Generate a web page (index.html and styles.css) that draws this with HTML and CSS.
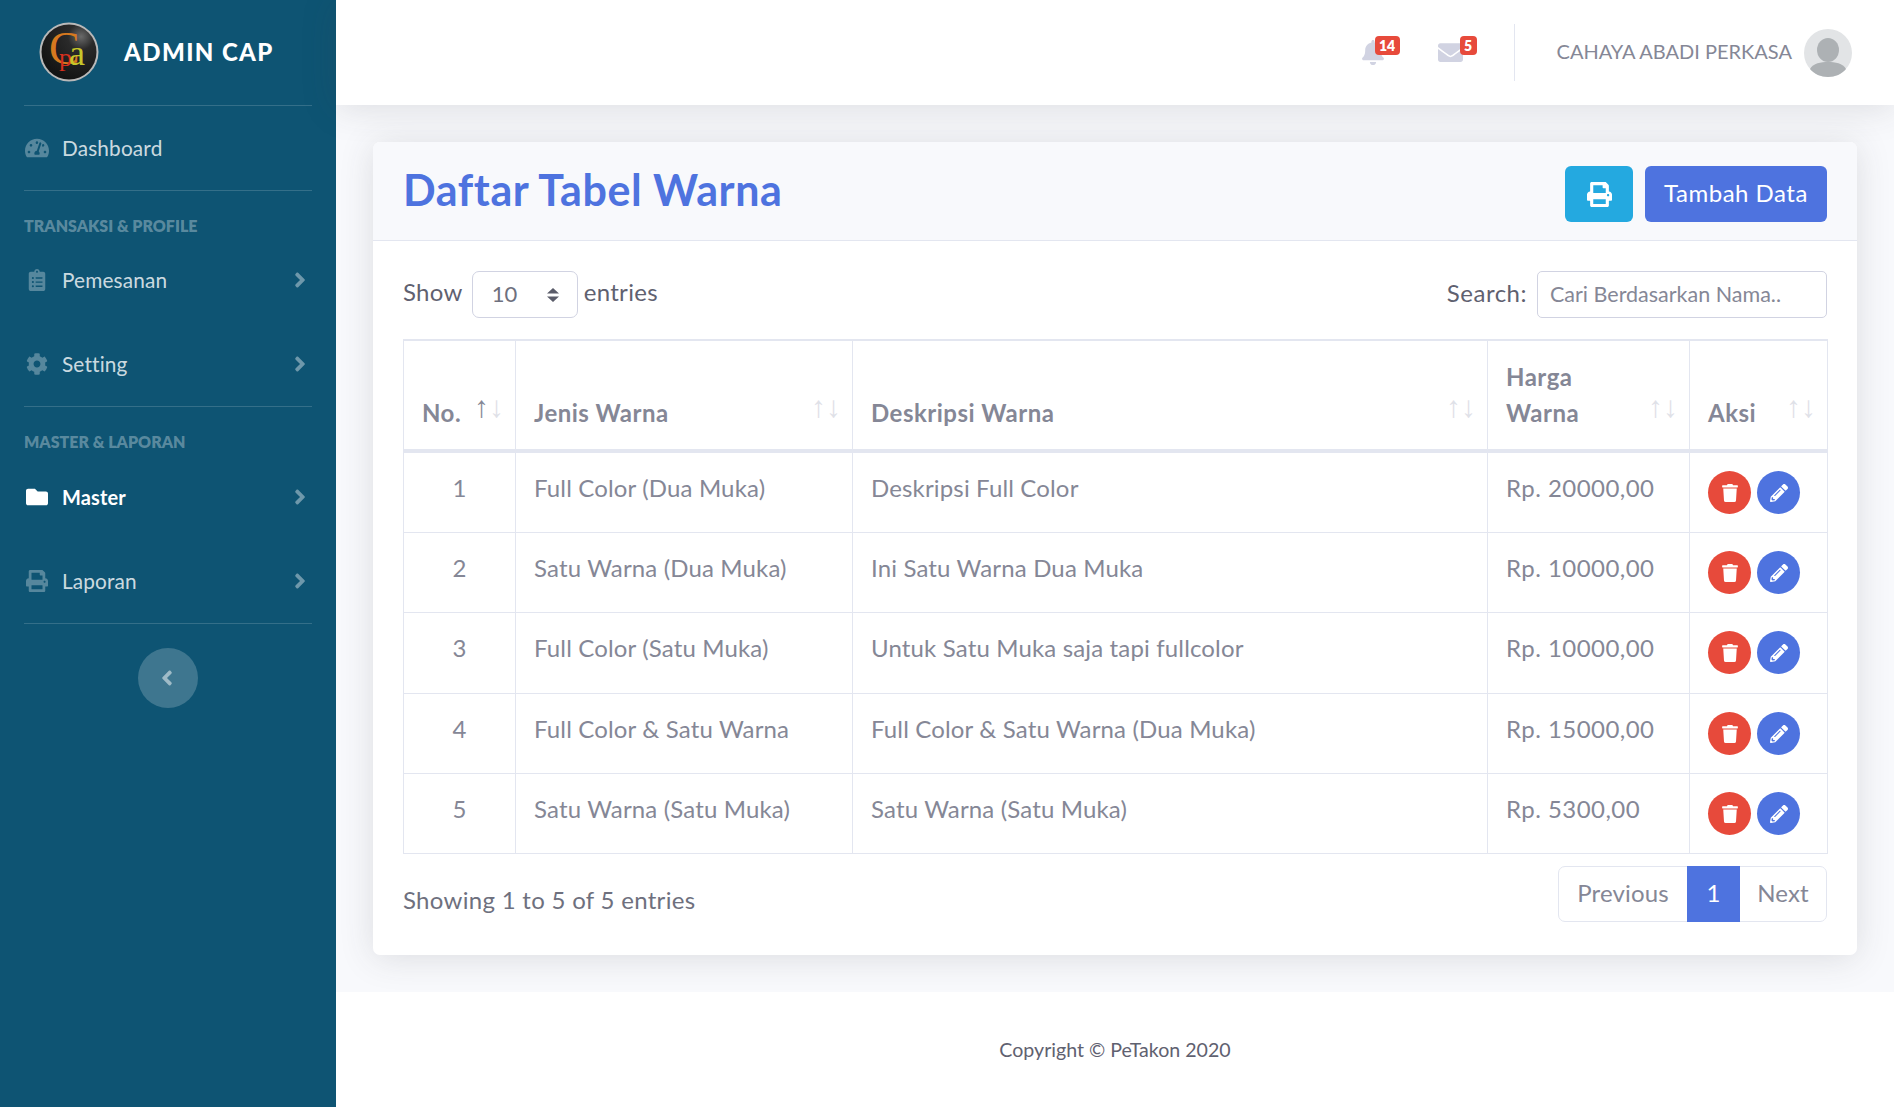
FILE: index.html
```html
<!DOCTYPE html>
<html lang="id">
<head>
<meta charset="utf-8">
<title>Daftar Tabel Warna</title>
<link rel="stylesheet" href="styles.css">
</head>
<body>
<svg class="sprite" aria-hidden="true">
  <symbol id="i-chev-r" viewBox="0 0 256 512"><path d="M224.3 273l-136 136c-9.4 9.4-24.6 9.4-33.9 0l-22.6-22.6c-9.4-9.4-9.4-24.6 0-33.9l96.4-96.4-96.4-96.4c-9.4-9.4-9.4-24.6 0-33.9L54.3 103c9.4-9.4 24.6-9.4 33.9 0l136 136c9.5 9.4 9.5 24.6.1 34z"/></symbol>
  <symbol id="i-chev-l" viewBox="0 0 256 512"><path d="M31.7 239l136-136c9.4-9.4 24.6-9.4 33.9 0l22.6 22.6c9.4 9.4 9.4 24.6 0 33.9L127.9 256l96.4 96.4c9.4 9.4 9.4 24.6 0 33.9L201.7 409c-9.4 9.4-24.6 9.4-33.9 0l-136-136c-9.5-9.4-9.5-24.6-.1-34z"/></symbol>
  <symbol id="i-trash" viewBox="0 0 448 512"><path d="M432 32H312l-9.4-18.7A24 24 0 0 0 281.1 0H166.8a23.72 23.72 0 0 0-21.4 13.3L136 32H16A16 16 0 0 0 0 48v32a16 16 0 0 0 16 16h416a16 16 0 0 0 16-16V48a16 16 0 0 0-16-16zM53.2 467a48 48 0 0 0 47.9 45h245.8a48 48 0 0 0 47.9-45L416 128H32z"/></symbol>
  <symbol id="i-pencil" viewBox="0 0 512 512"><path d="M497.9 142.1l-46.1 46.1c-4.7 4.7-12.3 4.7-17 0l-111-111c-4.7-4.7-4.7-12.3 0-17l46.1-46.1c18.7-18.7 49.1-18.7 67.9 0l60.1 60.1c18.8 18.7 18.8 49.1 0 67.9zM284.2 99.8L21.6 362.4.4 483.9c-2.9 16.4 11.4 30.6 27.8 27.8l121.5-21.3 262.6-262.6c4.7-4.7 4.7-12.3 0-17l-111-111c-4.8-4.7-12.4-4.7-17.1 0zM124.1 339.9c-5.5-5.5-5.5-14.3 0-19.8l154-154c5.5-5.5 14.3-5.5 19.8 0s5.5 14.3 0 19.8l-154 154c-5.5 5.5-14.3 5.5-19.8 0zM88 424h48v36.3l-64.5 11.3-31.1-31.1L51.7 376H88v48z"/></symbol>
  <symbol id="i-folder" viewBox="0 0 512 512"><path d="M464 128H272l-64-64H48C21.49 64 0 85.49 0 112v288c0 26.51 21.49 48 48 48h416c26.51 0 48-21.49 48-48V176c0-26.51-21.49-48-48-48z"/></symbol>
  <symbol id="i-print" viewBox="0 0 512 512"><path d="M448 192V77.25c0-8.49-3.37-16.62-9.37-22.63L393.37 9.37c-6-6-14.14-9.37-22.63-9.37H96C78.33 0 64 14.33 64 32v160c-35.35 0-64 28.65-64 64v112c0 8.84 7.16 16 16 16h48v96c0 17.67 14.33 32 32 32h320c17.67 0 32-14.33 32-32v-96h48c8.84 0 16-7.16 16-16V256c0-35.35-28.65-64-64-64zm-64 256H128v-96h256v96zm0-224H128V64h192v48c0 8.84 7.16 16 16 16h48v96zm48 72c-13.25 0-24-10.75-24-24 0-13.26 10.75-24 24-24s24 10.74 24 24c0 13.25-10.75 24-24 24z"/></symbol>
  <symbol id="i-cog" viewBox="0 0 512 512"><path d="M487.4 315.7l-42.6-24.6c4.3-23.2 4.3-47 0-70.2l42.6-24.6c4.9-2.8 7.1-8.6 5.5-14-11.1-35.6-30-67.8-54.7-94.6-3.8-4.1-10-5.1-14.8-2.3L380.8 110c-17.9-15.4-38.5-27.3-60.8-35.1V25.8c0-5.6-3.9-10.5-9.4-11.7-36.7-8.2-74.3-7.8-109.2 0-5.5 1.2-9.4 6.1-9.4 11.7V75c-22.2 7.9-42.8 19.8-60.8 35.1L88.7 85.5c-4.9-2.8-11-1.9-14.8 2.3-24.7 26.7-43.6 58.9-54.7 94.6-1.7 5.4.6 11.2 5.5 14L67.3 221c-4.3 23.2-4.3 47 0 70.2l-42.6 24.6c-4.9 2.8-7.1 8.6-5.5 14 11.1 35.6 30 67.8 54.7 94.6 3.8 4.1 10 5.1 14.8 2.3l42.6-24.6c17.9 15.4 38.5 27.3 60.8 35.1v49.2c0 5.6 3.9 10.5 9.4 11.7 36.7 8.2 74.3 7.8 109.2 0 5.5-1.2 9.4-6.1 9.4-11.7v-49.2c22.2-7.9 42.8-19.8 60.8-35.1l42.6 24.6c4.9 2.8 11 1.9 14.8-2.3 24.7-26.7 43.6-58.9 54.7-94.6 1.5-5.5-.7-11.3-5.6-14.1zM256 336c-44.1 0-80-35.9-80-80s35.9-80 80-80 80 35.9 80 80-35.9 80-80 80z"/></symbol>
  <symbol id="i-clip" viewBox="0 0 384 512"><path d="M336 64h-80c0-35.3-28.7-64-64-64s-64 28.7-64 64H48C21.5 64 0 85.5 0 112v352c0 26.5 21.5 48 48 48h288c26.5 0 48-21.5 48-48V112c0-26.5-21.5-48-48-48zM96 424c-13.3 0-24-10.7-24-24s10.7-24 24-24 24 10.7 24 24-10.7 24-24 24zm0-96c-13.3 0-24-10.7-24-24s10.7-24 24-24 24 10.7 24 24-10.7 24-24 24zm0-96c-13.3 0-24-10.7-24-24s10.7-24 24-24 24 10.7 24 24-10.7 24-24 24zm96-192c13.3 0 24 10.7 24 24s-10.7 24-24 24-24-10.7-24-24 10.7-24 24-24zm128 368c0 4.4-3.6 8-8 8H168c-4.4 0-8-3.6-8-8v-16c0-4.4 3.6-8 8-8h144c4.4 0 8 3.6 8 8v16zm0-96c0 4.4-3.6 8-8 8H168c-4.4 0-8-3.6-8-8v-16c0-4.4 3.6-8 8-8h144c4.4 0 8 3.6 8 8v16zm0-96c0 4.4-3.6 8-8 8H168c-4.4 0-8-3.6-8-8v-16c0-4.4 3.6-8 8-8h144c4.4 0 8 3.6 8 8v16z"/></symbol>
  <symbol id="i-gauge" viewBox="0 0 576 512"><path d="M288 32C128.94 32 0 160.94 0 320c0 52.8 14.25 102.26 39.06 144.8 5.61 9.62 16.3 15.2 27.44 15.2h443c11.14 0 21.83-5.58 27.44-15.2C561.75 422.26 576 372.8 576 320c0-159.06-128.94-288-288-288zm0 64c14.71 0 26.58 10.13 30.32 23.65-1.11 2.26-2.64 4.23-3.45 6.67l-9.22 27.67c-5.13 3.49-10.97 6.01-17.64 6.01-17.67 0-32-14.33-32-32S270.33 96 288 96zM96 384c-17.67 0-32-14.33-32-32s14.33-32 32-32 32 14.33 32 32-14.33 32-32 32zm48-160c-17.67 0-32-14.33-32-32s14.33-32 32-32 32 14.33 32 32-14.33 32-32 32zm246.77-72.41l-61.33 184C343.13 347.33 352 364.54 352 384c0 11.72-3.38 22.55-8.88 32H232.88c-5.5-9.45-8.88-20.28-8.88-32 0-33.94 26.5-61.43 59.9-63.59l61.34-184.01c4.17-12.56 17.73-19.45 30.36-15.17 12.57 4.19 19.35 17.79 15.17 30.36zm14.66 57.2l15.52-46.55c3.47-1.29 7.13-2.23 11.05-2.23 17.67 0 32 14.33 32 32s-14.33 32-32 32c-11.38-.01-20.89-6.28-26.57-15.22zM480 384c-17.67 0-32-14.33-32-32s14.33-32 32-32 32 14.33 32 32-14.33 32-32 32z"/></symbol>
  <symbol id="i-bell" viewBox="0 0 448 512"><path d="M224 512c35.32 0 63.97-28.65 63.97-64H160.03c0 35.35 28.65 64 63.97 64zm215.39-149.71c-19.32-20.76-55.47-51.99-55.47-154.29 0-77.7-54.48-139.9-127.94-155.16V32c0-17.67-14.32-32-31.98-32s-31.98 14.33-31.98 32v20.84C118.56 68.1 64.08 130.3 64.08 208c0 102.3-36.15 133.53-55.47 154.29-6 6.45-8.66 14.16-8.61 21.71.11 16.4 12.98 32 32.1 32h383.8c19.12 0 32-15.6 32.1-32 .05-7.55-2.61-15.27-8.61-21.71z"/></symbol>
  <symbol id="i-env" viewBox="0 0 512 512"><path d="M502.3 190.8c3.9-3.1 9.7-.2 9.7 4.7V400c0 26.5-21.5 48-48 48H48c-26.5 0-48-21.5-48-48V195.6c0-5 5.7-7.8 9.7-4.7 22.4 17.4 52.1 39.5 154.1 113.6 21.1 15.4 56.7 47.8 92.2 47.6 35.7.3 72-32.8 92.3-47.6 102-74.1 131.6-96.3 154-113.7zM256 320c23.2.4 56.6-29.2 73.4-41.4 132.7-96.3 142.8-104.7 173.4-128.7 5.8-4.5 9.2-11.5 9.2-18.9v-19c0-26.5-21.5-48-48-48H48C21.5 64 0 85.5 0 112v19c0 7.4 3.4 14.3 9.2 18.9 30.6 23.9 40.7 32.4 173.4 128.7 16.8 12.2 50.2 41.8 73.4 41.4z"/></symbol>
</svg>

<div class="app">
  <aside class="sidebar">
    <a class="brand">
      <svg class="logo" viewBox="0 0 60 60">
        <defs>
          <radialGradient id="lg-ball" cx="0.72" cy="0.22" r="0.8">
            <stop offset="0" stop-color="#6a6a6a"/>
            <stop offset="0.3" stop-color="#2a2a2a"/>
            <stop offset="1" stop-color="#141414"/>
          </radialGradient>
        </defs>
        <circle cx="30" cy="30" r="29.5" fill="#b9b9b9"/>
        <circle cx="30" cy="30" r="27.5" fill="url(#lg-ball)"/>
        <text class="logo-text"><tspan class="logo-c" x="10" y="42">C</tspan><tspan class="logo-p" x="20" y="44">p</tspan><tspan class="logo-a" x="30" y="43">a</tspan></text>
      </svg>
      <span class="brand-text">ADMIN CAP</span>
    </a>
    <hr class="divider">
    <a class="nav-link"><svg class="nav-icon"><use href="#i-gauge"/></svg><span>Dashboard</span></a>
    <hr class="divider">
    <div class="nav-heading">Transaksi &amp; Profile</div>
    <a class="nav-link"><svg class="nav-icon"><use href="#i-clip"/></svg><span>Pemesanan</span><svg class="nav-chev"><use href="#i-chev-r"/></svg></a>
    <a class="nav-link"><svg class="nav-icon"><use href="#i-cog"/></svg><span>Setting</span><svg class="nav-chev"><use href="#i-chev-r"/></svg></a>
    <hr class="divider">
    <div class="nav-heading tall">Master &amp; Laporan</div>
    <a class="nav-link active"><svg class="nav-icon"><use href="#i-folder"/></svg><span class="nav-label">Master</span><svg class="nav-chev"><use href="#i-chev-r"/></svg></a>
    <a class="nav-link"><svg class="nav-icon"><use href="#i-print"/></svg><span>Laporan</span><svg class="nav-chev"><use href="#i-chev-r"/></svg></a>
    <hr class="divider">
    <button class="sidebar-toggle" aria-label="Tutup menu"><svg><use href="#i-chev-l"/></svg></button>
  </aside>

  <div class="main">
    <header class="topbar">
      <a class="alert-item bell"><svg class="alert-icon"><use href="#i-bell"/></svg><span class="badge">14</span></a>
      <a class="alert-item env"><svg class="alert-icon"><use href="#i-env"/></svg><span class="badge">5</span></a>
      <div class="topbar-divider"></div>
      <span class="user-name">CAHAYA ABADI PERKASA</span>
      <svg class="avatar" viewBox="0 0 48 48">
        <circle cx="24" cy="24" r="24" fill="#e2e4e6"/>
        <ellipse cx="24" cy="21" rx="11" ry="12" fill="#adb1b4"/>
        <path d="M6 40c3-6 11-7 18-7s15 1 18 7c-4 5-11 8-18 8S10 45 6 40z" fill="#adb1b4"/>
      </svg>
    </header>

    <main class="content">
      <section class="card">
        <div class="card-header">
          <h1 class="card-title">Daftar Tabel Warna</h1>
          <div class="card-actions">
            <a class="btn btn-info" aria-label="Cetak"><svg><use href="#i-print"/></svg></a>
            <a class="btn btn-primary">Tambah Data</a>
          </div>
        </div>
        <div class="card-body">
          <div class="dt-controls">
            <label class="dt-length">Show
              <span class="select-wrap">
                <select class="select"><option>10</option></select>
                <svg class="select-arrows" viewBox="0 0 12 14"><path d="M6 0l6 5.500H0zM6 14L0 8.500h12z"/></svg>
              </span>
              entries</label>
            <label class="dt-search">Search: <input class="input" type="search" placeholder="Cari Berdasarkan Nama.."></label>
          </div>

          <table class="table">
            <colgroup><col class="c1"><col class="c2"><col class="c3"><col class="c4"><col class="c5"></colgroup>
            <thead>
              <tr>
                <th>No.<span class="sort asc"><i>↑</i><i>↓</i></span></th>
                <th>Jenis Warna<span class="sort"><i>↑</i><i>↓</i></span></th>
                <th>Deskripsi Warna<span class="sort"><i>↑</i><i>↓</i></span></th>
                <th>Harga<br>Warna<span class="sort"><i>↑</i><i>↓</i></span></th>
                <th>Aksi<span class="sort"><i>↑</i><i>↓</i></span></th>
              </tr>
            </thead>
            <tbody>
              <tr><td class="num">1</td><td>Full Color (Dua Muka)</td><td>Deskripsi Full Color</td><td class="price">Rp. 20000,00</td><td class="act"><a class="circle red"><svg class="ic-trash"><use href="#i-trash"/></svg></a><a class="circle blue"><svg class="ic-pencil"><use href="#i-pencil"/></svg></a></td></tr>
              <tr><td class="num">2</td><td>Satu Warna (Dua Muka)</td><td>Ini Satu Warna Dua Muka</td><td class="price">Rp. 10000,00</td><td class="act"><a class="circle red"><svg class="ic-trash"><use href="#i-trash"/></svg></a><a class="circle blue"><svg class="ic-pencil"><use href="#i-pencil"/></svg></a></td></tr>
              <tr><td class="num">3</td><td>Full Color (Satu Muka)</td><td>Untuk Satu Muka saja tapi fullcolor</td><td class="price">Rp. 10000,00</td><td class="act"><a class="circle red"><svg class="ic-trash"><use href="#i-trash"/></svg></a><a class="circle blue"><svg class="ic-pencil"><use href="#i-pencil"/></svg></a></td></tr>
              <tr><td class="num">4</td><td>Full Color &amp; Satu Warna</td><td>Full Color &amp; Satu Warna (Dua Muka)</td><td class="price">Rp. 15000,00</td><td class="act"><a class="circle red"><svg class="ic-trash"><use href="#i-trash"/></svg></a><a class="circle blue"><svg class="ic-pencil"><use href="#i-pencil"/></svg></a></td></tr>
              <tr><td class="num">5</td><td>Satu Warna (Satu Muka)</td><td>Satu Warna (Satu Muka)</td><td class="price">Rp. 5300,00</td><td class="act"><a class="circle red"><svg class="ic-trash"><use href="#i-trash"/></svg></a><a class="circle blue"><svg class="ic-pencil"><use href="#i-pencil"/></svg></a></td></tr>
            </tbody>
          </table>

          <div class="dt-footer">
            <div class="dt-info">Showing 1 to 5 of 5 entries</div>
            <nav class="pagination">
              <a class="page">Previous</a>
              <a class="page current">1</a>
              <a class="page">Next</a>
            </nav>
          </div>
        </div>
      </section>
    </main>

    <footer class="footer">Copyright © PeTakon 2020</footer>
  </div>
</div>
</body>
</html>
```
FILE: styles.css
```css
* { box-sizing: border-box; }
html, body { margin: 0; height: 100%; }
body {
  font-family: Lato, "Noto Sans", sans-serif;
  color: #858796;
  background: #f8f9fc;
  font-size: 24px;
  line-height: 36px;
  letter-spacing: .15px;
  overflow: hidden;
}
.sprite { position: absolute; width: 0; height: 0; }
svg { fill: currentColor; display: block; }
.app { display: flex; height: 1107px; }

/* sidebar */
.sidebar {
  width: 336px;
  flex: none;
  background: #0e5473;
  padding: 0 24px;
  display: flex;
  flex-direction: column;
}
.brand { height: 105px; display: flex; align-items: center; padding: 0 0 2px 15px; gap: 25px; }
.logo { width: 60px; height: 60px; flex: none; }
.logo-text { font-family: "Liberation Serif", serif; letter-spacing: 0; }
.logo-c { font-size: 46px; fill: #d6791f; }
.logo-p { font-size: 26px; fill: #d8301e; }
.logo-a { font-size: 36px; fill: #c7c72a; }
.brand-text { color: #fff; font-size: 24px; font-weight: 900; letter-spacing: 1.4px; line-height: 30px; }
.divider { margin: 0; border: 0; border-top: 1px solid rgba(255,255,255,.16); height: 1px; flex: none; }
.nav-link {
  height: 84px;
  flex: none;
  display: flex;
  align-items: center;
  color: rgba(255,255,255,.8);
  font-size: 20.8px;
  line-height: 30px;
}
.nav-icon { width: 24px; height: 22px; color: rgba(255,255,255,.3); margin: 0 13px 0 1px; flex: none; }
.nav-chev { width: 12px; height: 24px; color: rgba(255,255,255,.4); margin-left: auto; margin-right: 6px; }
.nav-link.active { color: #fff; font-weight: 700; }
.nav-link.active .nav-label { font-size: 20px; }
.nav-link.active .nav-icon { color: #fff; }
.nav-heading {
  height: 47px;
  padding-top: 25px;
  font-size: 16px;
  line-height: 20px;
  font-weight: 800;
  letter-spacing: 0;
  text-transform: uppercase;
  color: rgba(255,255,255,.32);
}
.nav-heading.tall { height: 48px; }
.sidebar-toggle {
  width: 60px; height: 60px;
  border: 0; border-radius: 50%;
  background: rgba(255,255,255,.2);
  color: rgba(255,255,255,.5);
  margin: 24px auto 0;
  padding: 0;
  display: flex; align-items: center; justify-content: center;
}
.sidebar-toggle svg { width: 12px; height: 24px; margin-left: -2px; }

/* main */
.main { flex: 1; min-width: 0; display: flex; flex-direction: column; }
.topbar {
  height: 105px;
  flex: none;
  background: #fff;
  display: flex;
  align-items: center;
  padding-right: 42px;
  box-shadow: 0 3px 34px rgba(58,59,69,.15);
  position: relative;
}
.alert-item { position: relative; display: block; color: #d1d3e2; }
.bell { margin-left: auto; width: 22px; height: 25px; }
.env { margin-left: 54px; width: 25px; height: 25px; }
.alert-icon { width: 100%; height: 100%; }
.badge {
  position: absolute;
  height: 19px;
  border-radius: 4px;
  background: #e74a3b;
  color: #fff;
  font-size: 14px;
  font-weight: 800;
  line-height: 19px;
  letter-spacing: 0;
  text-align: center;
  top: -4px;
}
.bell .badge { left: 13px; width: 25px; }
.env .badge { left: 22px; width: 17px; }
.topbar-divider { width: 1px; height: 57px; background: #e3e6f0; margin: 0 42px 0 51px; }
.user-name { color: #858796; font-size: 20px; line-height: 30px; letter-spacing: 0; padding-bottom: 3px; }
.avatar { width: 48px; height: 48px; margin-left: 12px; }

.content { flex: 1; padding: 37px; min-height: 0; }
.card {
  background: #fff;
  border-radius: 7px;
  box-shadow: 0 3px 34px rgba(58,59,69,.15);
  overflow: hidden;
  height: 813px;
}
.card-header {
  height: 99px;
  background: #f8f9fc;
  border-bottom: 1px solid #e3e6f0;
  padding: 0 30px;
  display: flex;
  align-items: center;
  justify-content: space-between;
}
.card-title { margin: -2px 0 0; color: #4e73df; font-size: 43px; font-weight: 700; line-height: 50px; letter-spacing: .6px; }
.card-actions { display: flex; gap: 12px; margin-top: 6px; }
.btn {
  height: 56px;
  border-radius: 6px;
  color: #fff;
  display: flex;
  align-items: center;
  justify-content: center;
}
.btn-info { background: #24a9e0; width: 68px; }
.btn-info svg { width: 25px; height: 25px; }
.btn-primary { background: #4e73df; width: 182px; font-size: 24px; letter-spacing: .5px; padding-bottom: 2px; }

.card-body { padding: 30px 30px 0; }
.dt-controls { display: flex; justify-content: space-between; height: 47px; margin-bottom: 21px; }
.dt-length, .dt-search { display: flex; align-items: flex-start; color: #5f6170; }
.dt-length { line-height: 41px; letter-spacing: .3px; }
.dt-search { line-height: 43px; letter-spacing: .5px; }
.select-wrap { position: relative; display: block; margin: 0 6px 0 9px; }
.select {
  appearance: none;
  display: block;
  width: 106px; height: 47px;
  border: 1px solid #d1d3e2;
  border-radius: 7px;
  background: #fff;
  color: #6e707e;
  font: inherit;
  font-size: 22px;
  padding: 0 0 2px 19px;
}
.select-arrows { position: absolute; right: 19px; top: 17px; width: 12px; height: 14px; fill: #5a5c69; }
.dt-search { gap: 10px; }
.input {
  width: 290px; height: 47px;
  border: 1px solid #d1d3e2;
  border-radius: 5px;
  padding: 0 12px 2px;
  font: inherit;
  font-size: 21.5px;
  letter-spacing: 0;
}
.input::placeholder { color: #858796; opacity: 1; }

.table { width: 1424px; border-collapse: collapse; table-layout: fixed; }
.c1 { width: 112px; } .c2 { width: 337px; } .c3 { width: 635px; } .c4 { width: 202px; } .c5 { width: 138px; }
.table th, .table td { border: 1px solid #e3e6f0; padding: 17px 18px 18px; vertical-align: top; text-align: left; font-weight: 400; }
.table thead th {
  padding: 18px;
  border-top-width: 2px;
  border-bottom-width: 4px;
  font-weight: 700;
  letter-spacing: .5px;
  vertical-align: bottom;
  position: relative;
  color: #858796;
}
.table tbody td { height: 80px; }
.table tbody tr:nth-child(3) td { height: 81px; }
.table td.num { text-align: center; }
.table td.price { letter-spacing: .45px; }
.sort { position: absolute; right: 11px; bottom: 30px; display: flex; font-size: 30px; line-height: 24px; font-family: "Liberation Sans", sans-serif; font-weight: 400; letter-spacing: 0; color: #dfe1e8; }
.sort i { font-style: normal; }
.sort.asc i:first-child { color: #858796; }
.table td.act { white-space: nowrap; padding: 18px 0 18px 18px; }
.circle {
  display: inline-flex;
  align-items: center;
  justify-content: center;
  width: 43px; height: 43px;
  border-radius: 50%;
  color: #fff;
  vertical-align: top;
}
.circle + .circle { margin-left: 6px; }
.red { background: #e74a3b; }
.blue { background: #4e73df; }
.ic-trash { width: 16px; height: 18px; }
.ic-pencil { width: 18px; height: 18px; }

.dt-footer { display: flex; justify-content: space-between; margin-top: 12px; }
.dt-info { padding-top: 16px; color: #6e707e; letter-spacing: .3px; }
.pagination { display: flex; height: 56px; border: 1px solid #e3e6f0; border-radius: 7px; }
.page { display: flex; align-items: center; justify-content: center; color: #858796; padding-bottom: 2px; }
.page:first-child { width: 128px; }
.page:last-child { width: 86px; }
.page.current { width: 53px; background: #4e73df; color: #fff; margin: -1px 0; }

.footer {
  height: 115px;
  flex: none;
  background: #fff;
  display: flex;
  align-items: center;
  justify-content: center;
  color: #5f6170;
  font-size: 19.6px;
  letter-spacing: 0;
}
```
